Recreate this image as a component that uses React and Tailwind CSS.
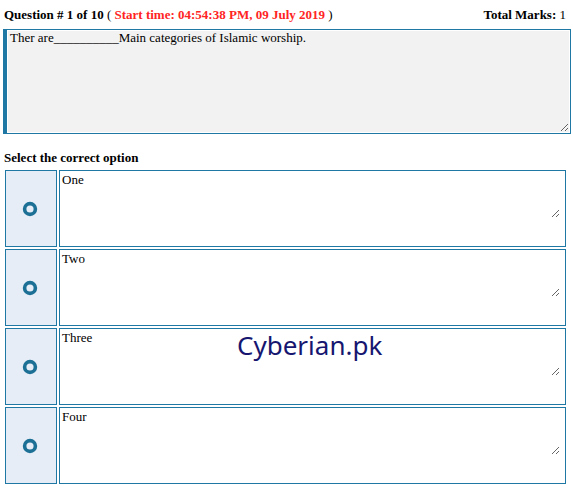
export default function App() {
  const options = ["One", "Two", "Three", "Four"];
  return (
    <div className="relative w-[573px] h-[491px] bg-white font-['Liberation_Serif',serif] text-[13px] text-black overflow-hidden">
      <div className="flex justify-between pl-[4px] pr-[7px] pt-[7px] leading-[15px]">
        <div>
          <span className="font-bold">Question # 1 of 10 </span>
          <span>( </span>
          <span className="font-bold text-[#ff2424]">Start time: 04:54:38 PM, 09 July 2019</span>
          <span> )</span>
        </div>
        <div>
          <span className="font-bold">Total Marks:</span>
          <span> 1</span>
        </div>
      </div>

      <div className="mt-[7px] ml-[3px] w-[568px] h-[105px] border border-[#1f77a3] border-l-[4px] p-[1px] bg-white">
        <textarea
          readOnly
          className="block w-full h-full bg-[#f2f2f2] pl-[2px] pt-0 leading-[14px] font-['Liberation_Serif',serif] text-[13px] text-black outline-none resize-y"
          defaultValue="Ther are__________Main categories of Islamic worship."
        />
      </div>

      <div className="mt-[16px] pl-[4px] leading-[15px] font-bold">Select the correct option</div>

      <div className="mt-[3px] ml-[3px] p-[2px] flex flex-col gap-[2px] w-[565px]">
        {options.map((o) => (
          <div key={o} className="flex gap-[2px] h-[77px]">
            <div className="w-[52px] h-full border border-[#1f77a3] bg-[#e6edf6] flex items-center justify-center">
              <svg width="18" height="18" viewBox="0 0 18 18" className="ml-[-3px]">
                <circle cx="9" cy="9" r="5.4" fill="none" stroke="#1c6f95" strokeWidth="3.6" />
              </svg>
            </div>
            <div className="w-[507px] h-full border border-[#1f77a3] bg-white">
              <textarea
                readOnly
                className="block w-[500px] h-[47px] bg-white pl-[2px] pt-[1px] leading-[15px] font-['Liberation_Serif',serif] text-[13px] text-black outline-none resize-y"
                defaultValue={o}
              />
            </div>
          </div>
        ))}
      </div>

      <div className="absolute left-[237px] top-[326px] font-['Noto_Sans',sans-serif] text-[26px] leading-normal text-[#161670] pointer-events-none">
        Cyberian.pk
      </div>
    </div>
  );
}
